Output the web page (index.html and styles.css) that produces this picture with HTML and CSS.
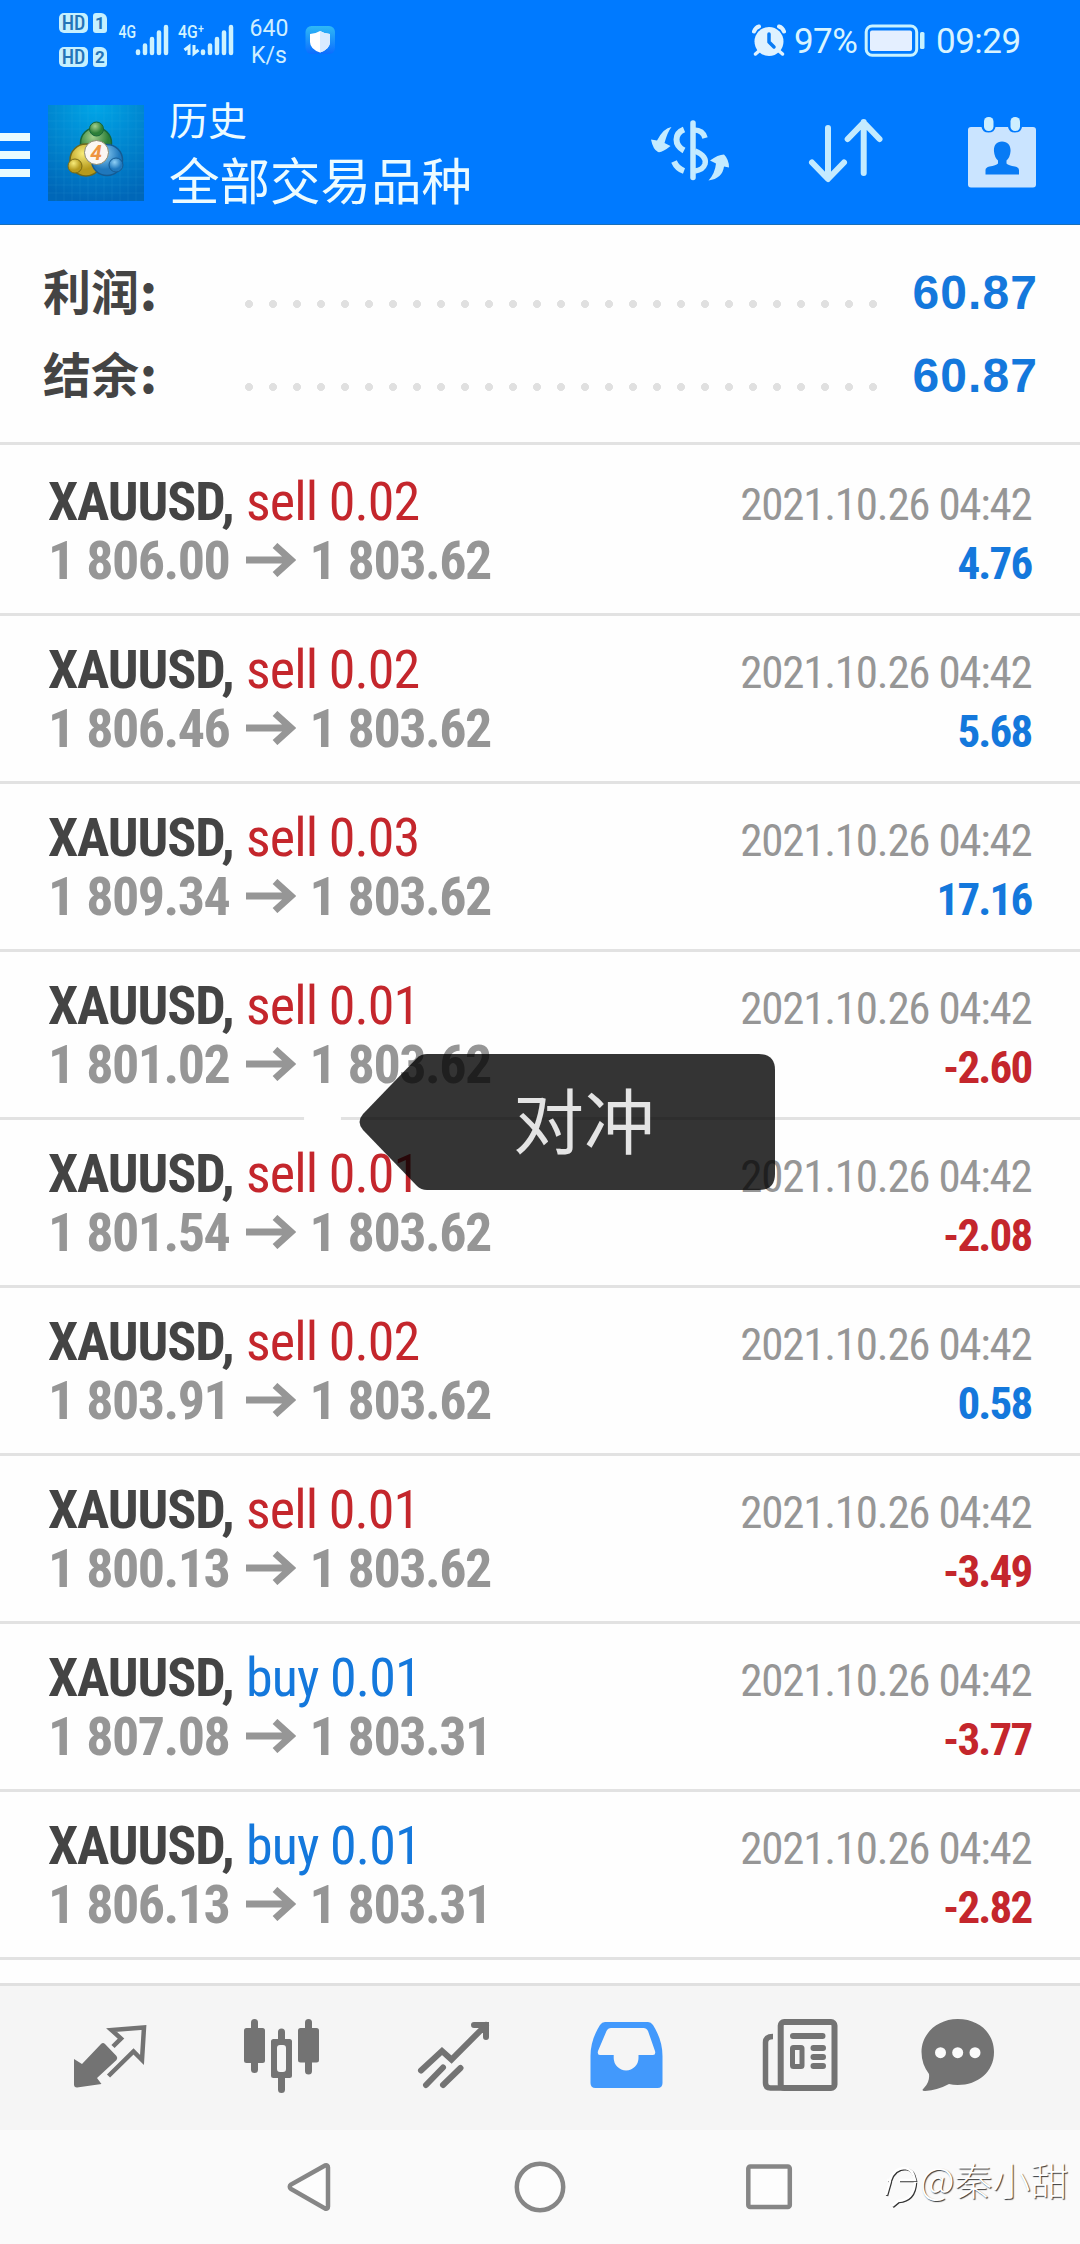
FILE: index.html
```html
<!DOCTYPE html>
<html lang="zh-CN">
<head>
<meta charset="utf-8">
<title>历史</title>
<link rel="stylesheet" href="styles.css">
</head>
<body>
<div class="screen">
  <header class="top">
    <div class="status">
      <div class="hd-group">
        <div class="hd-line"><span class="hd">HD</span><span class="sim">1</span></div>
        <div class="hd-line"><span class="hd">HD</span><span class="sim">2</span></div>
      </div>
      <svg class="signal" viewBox="116 16 116 48">
        <g class="net"><text x="118.5" y="38" textLength="17.5" lengthAdjust="spacingAndGlyphs">4G</text><text x="178" y="38" textLength="26" lengthAdjust="spacingAndGlyphs">4G⁺</text></g>
        <path d="M138 51.5V53M145 45.5V53M152 39V53M159 32.5V53M166 27V53M203 51.5V53M210 45.5V53M217 39V53M224 32.5V53M231 27V53" class="bars"/>
        <path d="M184.500 50l4.500-3.500V55M194 45v8.500l4.500-3.500" class="updown"/>
      </svg>
      <div class="speed"><span>640</span><span>K/s</span></div>
      <svg class="shield" viewBox="305 25 31 30">
        <defs><linearGradient id="sh" x2="0" y2="1"><stop stop-color="#2fb9f5"/><stop offset="1" stop-color="#0b6dff"/></linearGradient></defs>
        <rect x="305.500" y="26" width="29.500" height="28" rx="6" fill="url(#sh)"/>
        <path d="M320 31q5 3 10 3v8q0 7-10 10.500q-10-3.500-10-10.500v-8q5 0 10-3z" fill="#fff"/>
        <path d="M320 31q5 3 10 3v8q0 7-10 10.500z" fill="#d9ebff"/>
      </svg>
      <svg class="alarm" viewBox="752 24 34 33">
        <circle cx="769" cy="41.500" r="14.500" fill="#dff2ff"/>
        <path d="M754 31.500q1.500-4 5-5M784 31.500q-1.500-4-5-5" stroke="#dff2ff" stroke-width="4" stroke-linecap="round" fill="none"/>
        <path d="M759 51l-3.500 3M779 51l3.500 3" stroke="#dff2ff" stroke-width="3.500" stroke-linecap="round"/>
        <path d="M769 34v8l5 5" stroke="#087bf5" stroke-width="3.500" stroke-linecap="round" stroke-linejoin="round" fill="none"/>
      </svg>
      <span class="pct">97%</span>
      <svg class="battery" viewBox="864 23 62 35">
        <rect x="866.200" y="26" width="50.500" height="29.300" rx="6" fill="none" stroke="#c8f2ff" stroke-width="3"/>
        <rect x="870" y="30.500" width="42" height="20.500" rx="2" fill="#e4efff"/>
        <rect x="920" y="32" width="4.500" height="17" rx="1.500" fill="#c8f2ff"/>
      </svg>
      <span class="clock">09:29</span>
    </div>
    <div class="appbar">
      <div class="menu"><i></i><i></i><i></i></div>
      <svg class="logo" viewBox="0 0 96 96">
        <defs>
          <radialGradient id="lb" cx=".5" cy="0" r="1"><stop stop-color="#00a6e8"/><stop offset="1" stop-color="#0067b8"/></radialGradient>
          <radialGradient id="gr" cx=".4" cy=".3"><stop stop-color="#a4d08e"/><stop offset="1" stop-color="#2c7f38"/></radialGradient>
          <radialGradient id="ye" cx=".4" cy=".3"><stop stop-color="#f8ec7a"/><stop offset="1" stop-color="#b69a1c"/></radialGradient>
          <radialGradient id="bl" cx=".4" cy=".3"><stop stop-color="#8fd0f5"/><stop offset="1" stop-color="#1f78bd"/></radialGradient>
        </defs>
        <rect width="96" height="96" fill="url(#lb)"/>
        <path d="M8 0V96M16 0V96M24 0V96M32 0V96M40 0V96M48 0V96M56 0V96M64 0V96M72 0V96M80 0V96M88 0V96M0 8H96M0 16H96M0 24H96M0 32H96M0 40H96M0 48H96M0 56H96M0 64H96M0 72H96M0 80H96M0 88H96" stroke="#5ac8f5" stroke-opacity=".1" fill="none"/>
        <circle cx="48" cy="38" r="15.500" fill="url(#gr)" stroke="#17663a" stroke-width="1.500"/>
        <circle cx="38" cy="55" r="16" fill="url(#ye)" stroke="#6d681c" stroke-width="1.500"/>
        <circle cx="59" cy="55" r="15.500" fill="url(#bl)" stroke="#155b93" stroke-width="1.500"/>
        <circle cx="48.500" cy="24" r="7" fill="url(#gr)" stroke="#17663a"/>
        <circle cx="27" cy="61" r="7" fill="url(#ye)" stroke="#7a6b14"/>
        <circle cx="68" cy="60" r="7" fill="url(#bl)" stroke="#155b93"/>
        <circle cx="48.500" cy="47.500" r="12" fill="#fbf7f2" stroke="#8b8a70"/>
        <text x="48" y="55" text-anchor="middle" class="four">4</text>
      </svg>
      <div class="titles"><div class="t1">历史</div><div class="t2">全部交易品种</div></div>
      <svg class="act dollar" viewBox="648 114 84 74">
        <path d="M693 124V178.500" stroke-width="5.500"/>
        <path d="M694 131q9 0 11 8M695 152q12 5 10 13q-2 6-10 7" stroke-width="5.500" stroke-linecap="butt"/>
        <path d="M684 130.500q-7.500 3-7.500 10q0 7 7.500 11M674 162.500q3 7 10 9.500" stroke-width="6" stroke-linecap="butt"/>
        <path d="M671.500 128q-8 1-14.500 13.500l-6-1q2 10 7 12.500q4 1 12.500-6l-6-3q3-11 7-16zM708.500 181.500q14-2 15.500-14l5 1q0-8-5-13q-6 0-14 6l6 3q-1 10-7.500 17z" fill="#c4ebff" stroke="none"/>
      </svg>
      <svg class="act sort" viewBox="806 118 80 70">
        <path d="M828 130V180M812 164.500L828 181L844 164.500M863.700 175V124M847.700 141L863.700 124.500L879.500 141" stroke-width="6"/>
      </svg>
      <svg class="act cal" viewBox="966 115 72 74">
        <path d="M971 127h10.500q1 5.500 7 5.500t7-5.500h12.500q1 5.500 7 5.500t7-5.500h11q3 0 3 3v54.500q0 3-3 3h-62q-3 0-3-3v-54.500q0-3 3-3z" fill="#cae4ff" stroke="none"/>
        <rect x="984" y="117" width="9.500" height="14" rx="4.500" fill="#cdefff" stroke="none"/><rect x="1010.500" y="117" width="9.500" height="14" rx="4.500" fill="#cdefff" stroke="none"/>
        <path d="M1002 141.500c6 0 9 4.500 8.500 10q-.5 6-4 9v3q2 2 8.500 3q4 1 4 3.500v4.500h-33.500v-4.500q0-2.500 4-3.500q6.500-1 8.500-3v-3q-3.500-3-4-9c-.5-5.500 2-10 8-10z" fill="#087bf5" stroke="none"/>
      </svg>
    </div>
  </header>

  <section class="summary">
    <div class="sum"><span class="sum-l">利润<b>:</b></span><span class="dots"></span><span class="sum-v">60.87</span></div>
    <div class="sum"><span class="sum-l">结余<b>:</b></span><span class="dots"></span><span class="sum-v">60.87</span></div>
  </section>

  <svg class="defs"><symbol id="arrow" viewBox="0 0 50 34"><path d="M0 17H45M29 2.500L45 17L29 31.500" fill="none" stroke="#969696" stroke-width="7"/></symbol></svg>

  <main class="list">
    <article class="trade"><div class="line"><span><b>XAUUSD,</b> <em class="sell">sell 0.02</em></span><time>2021.10.26 04:42</time></div><div class="line"><span class="price">1 806.00<svg><use href="#arrow"/></svg>1 803.62</span><strong class="gain">4.76</strong></div></article>
    <article class="trade"><div class="line"><span><b>XAUUSD,</b> <em class="sell">sell 0.02</em></span><time>2021.10.26 04:42</time></div><div class="line"><span class="price">1 806.46<svg><use href="#arrow"/></svg>1 803.62</span><strong class="gain">5.68</strong></div></article>
    <article class="trade"><div class="line"><span><b>XAUUSD,</b> <em class="sell">sell 0.03</em></span><time>2021.10.26 04:42</time></div><div class="line"><span class="price">1 809.34<svg><use href="#arrow"/></svg>1 803.62</span><strong class="gain">17.16</strong></div></article>
    <article class="trade"><div class="line"><span><b>XAUUSD,</b> <em class="sell">sell 0.01</em></span><time>2021.10.26 04:42</time></div><div class="line"><span class="price">1 801.02<svg><use href="#arrow"/></svg>1 803.62</span><strong class="loss">-2.60</strong></div></article>
    <article class="trade"><div class="line"><span><b>XAUUSD,</b> <em class="sell">sell 0.01</em></span><time>2021.10.26 04:42</time></div><div class="line"><span class="price">1 801.54<svg><use href="#arrow"/></svg>1 803.62</span><strong class="loss">-2.08</strong></div></article>
    <article class="trade"><div class="line"><span><b>XAUUSD,</b> <em class="sell">sell 0.02</em></span><time>2021.10.26 04:42</time></div><div class="line"><span class="price">1 803.91<svg><use href="#arrow"/></svg>1 803.62</span><strong class="gain">0.58</strong></div></article>
    <article class="trade"><div class="line"><span><b>XAUUSD,</b> <em class="sell">sell 0.01</em></span><time>2021.10.26 04:42</time></div><div class="line"><span class="price">1 800.13<svg><use href="#arrow"/></svg>1 803.62</span><strong class="loss">-3.49</strong></div></article>
    <article class="trade"><div class="line"><span><b>XAUUSD,</b> <em class="buy">buy 0.01</em></span><time>2021.10.26 04:42</time></div><div class="line"><span class="price">1 807.08<svg><use href="#arrow"/></svg>1 803.31</span><strong class="loss">-3.77</strong></div></article>
    <article class="trade"><div class="line"><span><b>XAUUSD,</b> <em class="buy">buy 0.01</em></span><time>2021.10.26 04:42</time></div><div class="line"><span class="price">1 806.13<svg><use href="#arrow"/></svg>1 803.31</span><strong class="loss">-2.82</strong></div></article>
  </main>

  <nav class="tabs">
    <svg viewBox="24 1986 172 144"><path d="M113 2046.500L121 2038.500L111.500 2030L144 2027.500L142 2060L133.500 2051.500L108.500 2076" fill="none" stroke="#737373" stroke-width="4.500"/><path d="M74 2059L82 2064L101 2044q2-2 4 0l11.500 12q1.500 2 0 4L97 2078L101.500 2084L77 2087.500q-3 0-3-3z"/></svg>
    <svg viewBox="196 1986 172 144"><rect x="244" y="2028" width="21" height="35" rx="2.500"/><rect x="251" y="2019" width="7" height="54" rx="3.500"/><rect x="298" y="2028" width="21" height="34.500" rx="2.500"/><rect x="305" y="2019" width="7" height="55.500" rx="3.500"/><path d="M285 2039v-7a3.500 3.500 0 0 0-7 0v7h-4.500q-2.500 0-2.500 2.500v34q0 2.500 2.500 2.500h4.500v11.500a3.500 3.500 0 0 0 7 0v-11.500h4.500q2.500 0 2.500-2.500v-34q0-2.500-2.500-2.500zM277 2048q0-3 3-3h3q3 0 3 3v21q0 3-3 3h-3q-3 0-3-3z" fill-rule="evenodd"/></svg>
    <svg viewBox="368 1986 172 144"><path d="M421 2070.500L442 2051L451.500 2059.500L486 2025M474 2025H486V2037M443 2067.500L426 2085M460.500 2068L443 2085" fill="none" stroke="#737373" stroke-width="6" stroke-linecap="round"/></svg>
    <svg viewBox="540 1986 172 144"><path d="M605 2022h43q3 0 5 3q9.500 15 9.500 31v27q0 5-5 5h-62q-5 0-5-5v-27q0-16 9.500-31q2-3 5-3zM611 2028q-3 0-4.500 3l-8.500 20q-1 4 2 4h13.700v3a12.400 12.400 0 0 0 24.800 0v-3h14.500q3 0 2-4l-7-20q-1.500-3-4.500-3z" fill="#4299fc" fill-rule="evenodd"/></svg>
    <svg viewBox="712 1986 172 144"><g fill="none" stroke="#737373" stroke-width="6"><rect x="780.700" y="2022" width="53.800" height="66" rx="3.500"/><path d="M773 2036.500q-7.500 0-7.500 6V2083q0 5 5 5H785" stroke-width="5.500"/><path d="M793 2036H822.500M813.500 2048H823M813.500 2057H823M813.500 2066H823" stroke-linecap="round"/><rect x="792.500" y="2047.500" width="9.500" height="19" rx="1" stroke-width="5"/></g></svg>
    <svg viewBox="884 1986 172 144"><path d="M957.700 2019C980 2019 994 2034 994 2052C994 2072 978 2085 957.700 2085Q953 2085 949 2084Q938 2090 925 2091Q920.500 2091 924 2088Q930 2082 929 2074Q921.500 2064 921.500 2052C921.500 2034 937 2019 957.700 2019z"/><g fill="#fbfbfb"><circle cx="940.500" cy="2052.700" r="5.500"/><circle cx="957.700" cy="2052.700" r="5.500"/><circle cx="975" cy="2052.700" r="5.500"/></g></svg>
  </nav>

  <footer class="sysnav">
    <svg viewBox="284 2158 50 58"><path d="M325 2165.500L291 2184.500q-2.500 2 0 4.500L325 2208.500q3 1 3-2v-39q0-3-3-2z"/></svg>
    <svg viewBox="511 2158 58 58"><circle cx="540" cy="2187" r="23.200"/></svg>
    <svg viewBox="740 2158 58 58"><rect x="748.300" y="2166.500" width="41.500" height="40.500" rx="2"/></svg>
  </footer>

  <div class="pointer-dot"></div>
  <div class="bubble">
    <svg viewBox="0 0 416 136"><path d="M68 0H400Q416 0 416 16V120Q416 136 400 136H68Q62 136 58 132L4 76Q-3 68 4 60L58 4Q62 0 68 0z"/></svg>
    <span>对冲</span>
  </div>
  <div class="mark"><svg viewBox="884 2158 36 50"><path d="M887 2180H890Q894 2168 905 2168Q913 2169 915 2180L899 2180M890 2181L886 2195M915 2182Q914 2200 898 2201L892 2206" fill="none"/></svg><span>@秦小甜</span></div>
</div>
</body>
</html>
```
FILE: styles.css
```css
* { box-sizing: border-box; }
body { margin: 0; background: #fefefe; font-family: Roboto, "Noto Sans CJK SC", sans-serif; }
.screen { position: relative; width: 1080px; height: 2244px; overflow: hidden; display: flex; flex-direction: column; background: #fefefe; }
.defs { display: none; }

.top { height: 225px; background: #007aff; border-bottom: 1px solid #1a6fb8; color: #ecfbff; flex: none; }
.status { height: 81px; display: flex; align-items: flex-start; padding-left: 59px; }
.hd-group { display: flex; flex-direction: column; gap: 14px; padding-top: 13px; width: 57px; }
.hd-line { display: flex; gap: 5px; height: 20px; }
.hd, .sim { background: #c5f0ff; color: #2474b8; font-weight: 700; font-size: 19px; line-height: 21px; text-align: center; border-radius: 5px; }
.hd { width: 29px; font-weight: 500; font-stretch: 75%; font-size: 20px; }
.sim { width: 14px; font-size: 17px; border-radius: 3px 6px 3px 3px; }
.signal { width: 116px; height: 48px; margin-top: 16px; overflow: visible; }
.net text { font: 500 19px Roboto, sans-serif; fill: #d2f3ff; }
.bars { stroke: #cdf2ff; stroke-width: 4.5; stroke-linecap: round; fill: none; }
.updown { stroke: #d6f6ff; stroke-width: 3; fill: none; }
.speed { display: flex; flex-direction: column; margin: 15px 0 0 17px; width: 40px; align-items: center; font-size: 23px; line-height: 27px; color: #cfeeff; }
.shield { width: 31px; height: 30px; margin: 25px 0 0 16px; }
.alarm { width: 34px; height: 33px; margin: 24px 0 0 416px; }
.pct, .clock { font-size: 35px; line-height: 41px; margin-top: 21px; color: #d8f4ff; white-space: nowrap; }
.pct { width: 64px; margin-left: 8px; letter-spacing: -.6px; }
.battery { width: 62px; height: 35px; margin-top: 23px; margin-left: 6px; }
.clock { margin-left: 10px; letter-spacing: -.5px; }

.appbar { display: flex; height: 143px; align-items: flex-start; }
.menu { display: flex; flex-direction: column; gap: 10px; width: 30px; padding-top: 52px; }
.menu i { height: 8px; background: #e8fbff; }
.logo { width: 96px; height: 96px; margin: 24px 0 0 18px; }
.four { font: italic 700 21px Roboto, sans-serif; fill: #ee9440; }
.titles { width: 481px; margin-left: 25px; padding-top: 20px; white-space: nowrap; }
.t1 { font-size: 39px; line-height: 42px; }
.t2 { font-size: 50.5px; line-height: 60px; margin-top: 10px; }
.act { flex: none; fill: none; stroke: #c4ebff; stroke-linecap: round; stroke-linejoin: round; }
.dollar { width: 84px; height: 74px; margin: 32px 0 0 -2px; }
.sort { width: 80px; height: 70px; margin: 35px 0 0 74px; }
.cal { width: 72px; height: 74px; margin: 34px 0 0 80px; }

.summary { height: 220px; flex: none; padding: 26px 44px 0 43px; border-bottom: 3px solid #e2e2e2; }
.sum { display: flex; height: 83px; align-items: center; }
.sum-l { font-weight: 700; font-size: 48px; color: #444; width: 200px; line-height: 83px; padding-bottom: 2px; }
.sum-l b { font-family: "Noto Sans CJK SC", sans-serif; margin-left: 1px; }
.dots { width: 648px; height: 8px; margin: 22px 0 0 -6px; background: radial-gradient(circle at 12px 4px, #e0e0e0 3.7px, transparent 4.3px) 0 0 / 24px 8px repeat-x; }
.sum-v { margin-left: auto; font-family: "Liberation Sans", sans-serif; font-weight: 700; font-size: 48px; color: #1478dc; letter-spacing: 1.1px; margin-right: -2px; }

.list { flex: none; padding-top: 3px; height: 1538px; }
.trade { height: 168px; padding: 24px 48px 0; border-bottom: 3px solid #e2e2e2; font-family: "Roboto Condensed", Roboto, sans-serif; font-stretch: 75%; font-size: 54px; line-height: 59px; }
.line { display: flex; justify-content: space-between; align-items: baseline; height: 59px; white-space: nowrap; }
.line b { color: #444; font-weight: 700; letter-spacing: -1.1px; }
.line em { font-style: normal; letter-spacing: -.9px; }
.sell { color: #c4262c; }
.buy { color: #1478dc; }
.line time { font-size: 45px; color: #969696; letter-spacing: -1.25px; margin-right: .5px; }
.price { font-weight: 700; color: #969696; letter-spacing: -1.5px; word-spacing: 1.5px; }
.price svg { width: 50px; height: 34px; margin: 0 13px 0 17px; vertical-align: 2px; }
.line strong { font-size: 45px; font-weight: 700; letter-spacing: -1.8px; margin-right: .5px; }
.gain { color: #1478dc; }
.loss { color: #c4262c; }

.tabs { display: flex; flex: none; height: 147px; padding-left: 24px; border-top: 3px solid #e0e0e0; background: #f5f5f5; fill: #737373; }
.tabs svg { width: 172px; height: 144px; }
.sysnav { display: flex; flex: none; height: 114px; padding: 28px 0 0 284px; background: #fafafa; fill: #fdfdfd; stroke: #868686; stroke-width: 4.5; }
.sysnav svg { height: 58px; width: 58px; }
.sysnav svg:first-child { width: 50px; margin-right: 177px; }
.sysnav svg:last-child { margin-left: 171px; }

.pointer-dot { position: absolute; left: 304px; top: 1100px; width: 37px; height: 37px; border-radius: 50%; background: #fefefe; }
.bubble { position: absolute; left: 359px; top: 1054px; width: 416px; height: 136px; opacity: .97; }
.bubble svg { width: 416px; height: 136px; fill: rgba(0, 0, 0, .82); display: block; }
.bubble span { position: absolute; left: 154px; top: 19px; font-size: 71px; line-height: 102px; color: #e4e4e4; white-space: nowrap; }
.mark { position: absolute; left: 884px; top: 2153px; display: flex; }
.mark svg { width: 36px; height: 50px; margin-top: 5px; stroke: #fff; stroke-width: 2.5; filter: drop-shadow(1px 1px 0 #333); }
.mark span { font: 300 38px/52px "Noto Sans CJK SC", sans-serif; color: #fff; text-shadow: 1px 1px 1px #333; white-space: nowrap; }
```
